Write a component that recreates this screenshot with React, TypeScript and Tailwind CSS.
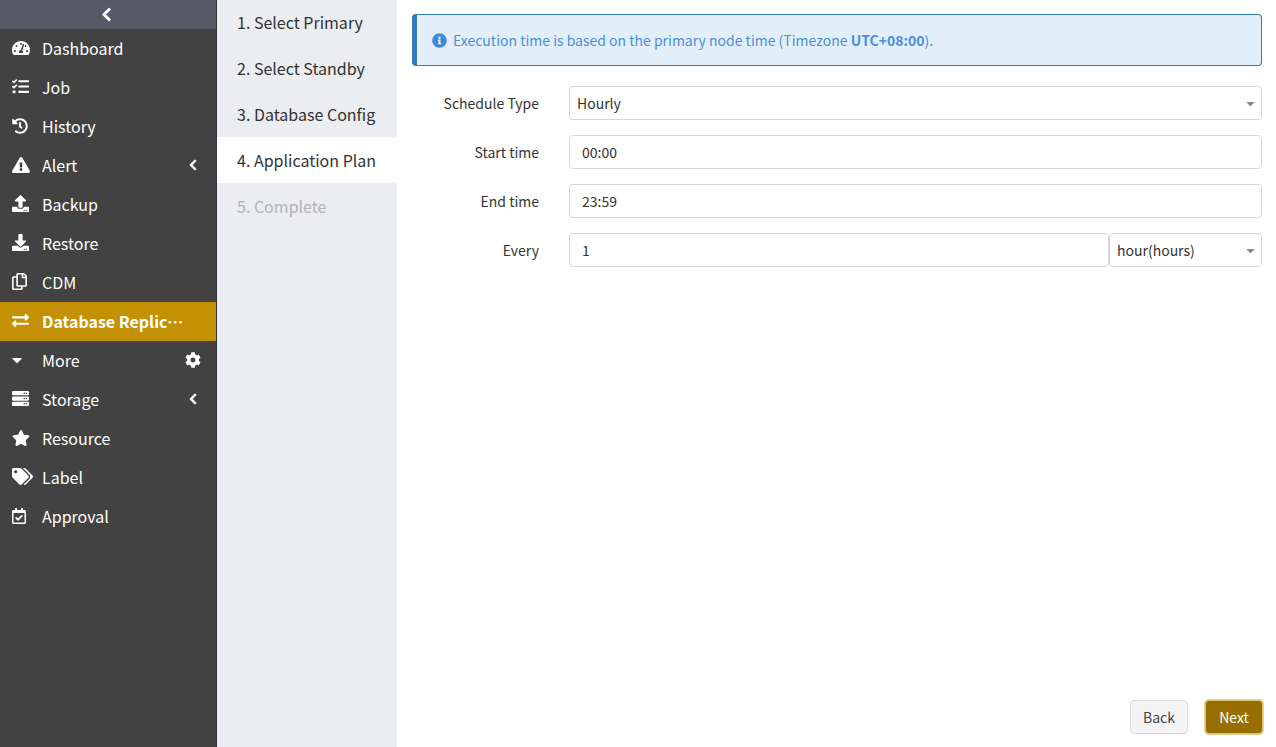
import type { ReactNode } from 'react';
import {
  FaCaretDown,
  FaChevronLeft,
  FaCog,
  FaDownload,
  FaExchangeAlt,
  FaExclamationTriangle,
  FaHistory,
  FaInfoCircle,
  FaRegCalendarCheck,
  FaRegCopy,
  FaServer,
  FaStar,
  FaTachometerAlt,
  FaTags,
  FaTasks,
  FaUpload,
} from 'react-icons/fa';

type NavItem = {
  label: string;
  icon: ReactNode;
  active?: boolean;
  right?: ReactNode;
};

const chevron = <FaChevronLeft className="text-[12px]" stroke="currentColor" strokeWidth={30} />;

const navItems: NavItem[] = [
  { label: 'Dashboard', icon: <FaTachometerAlt className="text-[18px]" /> },
  { label: 'Job', icon: <FaTasks className="text-[17px]" /> },
  { label: 'History', icon: <FaHistory className="text-[16px]" /> },
  { label: 'Alert', icon: <FaExclamationTriangle className="text-[18px]" />, right: chevron },
  { label: 'Backup', icon: <FaUpload className="text-[17px]" /> },
  { label: 'Restore', icon: <FaDownload className="text-[17px]" /> },
  { label: 'CDM', icon: <FaRegCopy className="-ml-px text-[17px]" /> },
  { label: 'Database Replication', icon: <FaExchangeAlt className="text-[17px]" />, active: true },
  {
    label: 'More',
    icon: <FaCaretDown className="-ml-[3px] text-[16px]" />,
    right: <FaCog className="text-[16px]" />,
  },
  { label: 'Storage', icon: <FaServer className="text-[17px]" />, right: chevron },
  { label: 'Resource', icon: <FaStar className="text-[18px]" /> },
  { label: 'Label', icon: <FaTags className="text-[21px]" /> },
  { label: 'Approval', icon: <FaRegCalendarCheck className="-ml-px text-[16px]" /> },
];

const steps = [
  { label: '1. Select Primary' },
  { label: '2. Select Standby' },
  { label: '3. Database Config' },
  { label: '4. Application Plan', active: true },
  { label: '5. Complete', disabled: true },
];

function Sidebar() {
  return (
    <aside className="w-[217px] shrink-0 border-r border-[#33363d] bg-[#424242] text-white">
      <div className="flex h-[29px] items-center justify-center bg-[#565a66] pr-[3px]">
        <FaChevronLeft className="text-[15px]" stroke="currentColor" strokeWidth={30} />
      </div>
      {navItems.map((item) => (
        <div
          key={item.label}
          className={`flex h-[39px] items-center pb-0.5 pl-3 pr-[15px] text-[16px] ${
            item.active ? 'bg-[#c49105] font-bold' : ''
          }`}
        >
          <span className="flex w-[30px] shrink-0 items-center">{item.icon}</span>
          <span className="w-[142px] truncate">{item.label}</span>
          {item.right && <span className="ml-auto flex w-[16px] justify-center">{item.right}</span>}
        </div>
      ))}
    </aside>
  );
}

function Steps() {
  return (
    <nav className="w-[180px] shrink-0 overflow-hidden bg-[#ebedf1] text-[16px] text-[#333333]">
      {steps.map((step, i) => (
        <div
          key={step.label}
          className={`flex h-[46px] items-center pl-5 ${i === 0 ? '-mt-px' : ''} ${
            step.active ? 'bg-white' : ''
          } ${step.disabled ? 'text-[#b3b3b3]' : ''}`}
        >
          {step.label}
        </div>
      ))}
    </nav>
  );
}

function Field({ label, children }: { label: string; children: ReactNode }) {
  return (
    <div className="flex h-[34px] items-center">
      <label className="w-[127px] shrink-0 text-right">{label}</label>
      <div className="ml-[30px] flex min-w-0 flex-1">{children}</div>
    </div>
  );
}

function TextInput({ value, className = '' }: { value: string; className?: string }) {
  return (
    <input
      readOnly
      value={value}
      className={`h-[34px] min-w-0 flex-1 rounded border border-[#d2d6de] bg-white px-3 text-[#333333] outline-none ${className}`}
    />
  );
}

function SelectBox({ value, className = '' }: { value: string; className?: string }) {
  return (
    <div
      className={`flex h-[34px] items-center justify-between rounded border border-[#d2d6de] bg-white pl-[7px] pr-1 ${className}`}
    >
      <span>{value}</span>
      <FaCaretDown className="text-[13px] text-[#888888]" />
    </div>
  );
}

export default function App() {
  return (
    <div className="flex h-[747px] w-[1276px] overflow-hidden bg-white font-['Noto_Sans_CJK_SC','Noto_Sans',sans-serif] text-[14px] text-[#333333]">
      <Sidebar />
      <Steps />
      <main className="flex min-w-0 flex-1 flex-col pb-[13px] pl-[15px] pr-[14px] pt-[14px]">
        <div className="flex h-[52px] items-center rounded border border-l-[5px] border-[#337ab7] bg-[#e2eff9] pl-[15px] text-[#4a90d9]">
          <FaInfoCircle className="mr-1.5 text-[15px] text-[#3f8ad6]" />
          <span>
            Execution time is based on the primary node time (Timezone <b>UTC+08:00</b>).
          </span>
        </div>
        <form className="mt-5 flex flex-col gap-[15px]">
          <Field label="Schedule Type">
            <SelectBox value="Hourly" className="flex-1" />
          </Field>
          <Field label="Start time">
            <TextInput value="00:00" />
          </Field>
          <Field label="End time">
            <TextInput value="23:59" />
          </Field>
          <Field label="Every">
            <TextInput value="1" />
            <SelectBox value="hour(hours)" className="w-[153px] shrink-0" />
          </Field>
        </form>
        <div className="-mr-px mt-auto flex items-center justify-end gap-[17px]">
          <button className="h-[34px] w-[58px] rounded border border-[#dddddd] bg-[#f4f4f4] text-[#444444]">
            Back
          </button>
          <button className="h-[34px] w-[58px] rounded border border-[#dfc06f] bg-[#976f00] text-white ring-1 ring-[#e8d199]">
            Next
          </button>
        </div>
      </main>
    </div>
  );
}
